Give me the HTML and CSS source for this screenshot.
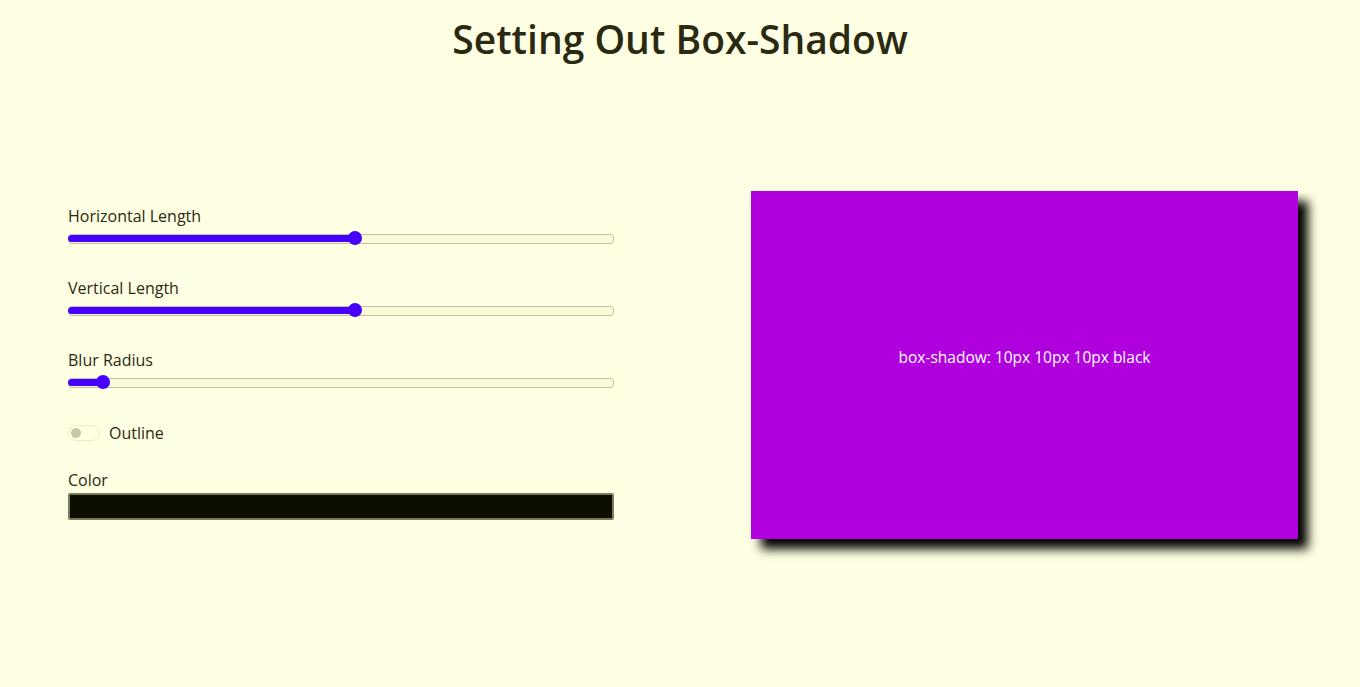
FILE: index.html
```html
<!DOCTYPE html>
<html lang="en">
<head>
<meta charset="utf-8">
<title>Setting Out Box-Shadow</title>
<link rel="stylesheet" href="styles.css">
</head>
<body>
<h1 class="title">Setting Out Box-Shadow</h1>
<main class="layout">
  <section class="controls">
    <div class="group">
      <div class="label">Horizontal Length</div>
      <div class="slider" style="--p: 0.526">
        <div class="fill"></div><div class="thumb"></div>
      </div>
    </div>
    <div class="group">
      <div class="label">Vertical Length</div>
      <div class="slider" style="--p: 0.526">
        <div class="fill"></div><div class="thumb"></div>
      </div>
    </div>
    <div class="group">
      <div class="label">Blur Radius</div>
      <div class="slider" style="--p: 0.0526">
        <div class="fill"></div><div class="thumb"></div>
      </div>
    </div>
    <div class="toggle-row">
      <span class="switch"><span class="knob"></span></span>
      <span class="toggle-label">Outline</span>
    </div>
    <div class="color-group">
      <div class="label">Color</div>
      <div class="color-input"></div>
    </div>
  </section>
  <section class="preview">
    <div class="box">box-shadow: 10px 10px 10px black</div>
  </section>
</main>
</body>
</html>
```
FILE: styles.css
```css
* { box-sizing: border-box; }
html, body { margin: 0; }
body {
  background: #ffffe3;
  color: #2a2a12;
  font-family: "Open Sans", "Noto Sans", sans-serif;
  height: 687px;
  overflow: hidden;
}
.title {
  margin: 0;
  padding-top: 13px;
  text-align: center;
  font-size: 39px;
  font-weight: 600;
  line-height: 52px;
  color: #2a2a12;
}
.layout {
  display: flex;
  align-items: center;
  margin-top: 126px;
}
.controls {
  width: 680px;
  padding-left: 68px;
  padding-right: 66px;
  padding-bottom: 2px;
}
.group { margin-bottom: 35px; }
.label {
  font-size: 16px;
  line-height: 17px;
  height: 18px;
}
.slider {
  position: relative;
  margin-top: 5px;
  height: 14px;
  display: flex;
  align-items: center;
}
.slider::before {
  content: "";
  position: absolute;
  left: 0; right: 0;
  top: 3px; height: 8px;
  border: 1px solid #c2c29a;
  border-radius: 4px;
  background: #fbfbdc;
}
.fill {
  position: relative;
  height: 7px;
  width: calc(7px + 532px * var(--p));
  background: #4600ff;
  border-radius: 4px;
}
.thumb {
  position: absolute;
  top: 0;
  left: calc(532px * var(--p));
  width: 14px; height: 14px;
  border-radius: 50%;
  background: #4600ff;
}
.toggle-row {
  display: flex;
  align-items: center;
  height: 18px;
  gap: 9px;
}
.switch {
  width: 32px; height: 16px;
  border: 1px solid #ebebcb;
  border-radius: 8px;
  display: flex;
  align-items: center;
  padding-left: 2px;
}
.knob {
  width: 10px; height: 10px;
  border-radius: 50%;
  background: #c8c8a6;
}
.toggle-label {
  font-size: 16px;
  line-height: 18px;
}
.color-group { margin-top: 30px; }
.color-input {
  margin-top: 3px;
  height: 27px;
  background: #0d0d00;
  border: 2px solid #7c7c58;
  border-radius: 2px;
}
.preview {
  width: 680px;
  padding-left: 71px;
}
.box {
  width: 547px;
  height: 348px;
  background: #b000de;
  box-shadow: 10px 10px 10px black;
  color: #fff;
  display: flex;
  align-items: center;
  justify-content: center;
  font-size: 15.5px;
  padding-bottom: 16px;
}
```
